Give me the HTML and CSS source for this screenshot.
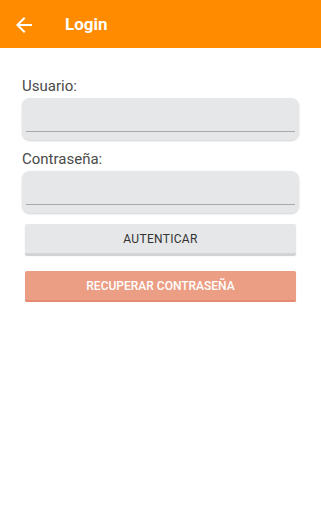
FILE: index.html
```html
<!DOCTYPE html>
<html lang="es">
<head>
    <meta charset="UTF-8">
    <meta name="viewport" content="width=device-width, initial-scale=1.0">
    <title>Login</title>
    <link rel="stylesheet" href="styles.css">
</head>
<body>
    <header class="toolbar">
        <button class="back" type="button" aria-label="Volver">
            <svg width="24" height="24" viewBox="0 0 24 24">
                <path d="M20 11H7.83l5.59-5.59L12 4l-8 8 8 8 1.41-1.41L7.83 13H20v-2z" fill="#fff"/>
            </svg>
        </button>
        <h1>Login</h1>
    </header>

    <form class="login">
        <label for="usuario">Usuario:</label>
        <div class="field">
            <input type="text" id="usuario">
        </div>

        <label for="clave">Contraseña:</label>
        <div class="field">
            <input type="password" id="clave">
        </div>

        <button type="submit" class="btn">AUTENTICAR</button>
        <button type="button" class="btn btn-recover">RECUPERAR CONTRASEÑA</button>
    </form>
</body>
</html>
```

FILE: styles.css
```css
* {
    margin: 0;
    padding: 0;
    box-sizing: border-box;
    font-family: Roboto, 'Noto Sans', sans-serif;
}

body {
    background: #fff;
    width: 321px;
}

.toolbar {
    height: 48px;
    background: #ff8c00;
    display: flex;
    align-items: center;
}

.back {
    width: 24px;
    height: 24px;
    margin-left: 12px;
    margin-top: 2px;
    background: none;
    border: none;
    display: flex;
}

.toolbar h1 {
    margin-left: 29px;
    color: #fff;
    font-size: 17px;
    font-weight: 700;
}

.login {
    padding: 29px 22px 0;
    display: flex;
    flex-direction: column;
}

label {
    font-size: 15px;
    line-height: 18px;
    color: #4a4a4a;
    margin-bottom: 3px;
}

.field {
    height: 42px;
    background: #e6e7e9;
    border-radius: 8px;
    padding: 0 4px;
    box-shadow: 0 1px 2px rgba(0,0,0,0.18);
    margin-bottom: 10px;
}

.field input {
    display: block;
    width: 100%;
    height: 34px;
    background: transparent;
    border: none;
    border-bottom: 1px solid #a8a8a8;
    outline: none;
    font-size: 15px;
}

.field + label {
    margin-bottom: 3px;
}

.btn {
    margin: 1px 3px 0;
    height: 31px;
    background: #e6e7e9;
    border: none;
    border-radius: 2px;
    box-shadow: 0 1px 1px rgba(0,0,0,0.2);
    border-bottom: 2px solid #d3d4d7;
    font-size: 12px;
    font-weight: 400;
    color: #333;
    letter-spacing: 0.3px;
}

.btn-recover {
    margin-top: 16px;
    background: #eb9e84;
    border-bottom-color: #e48b70;
    color: #fff;
    font-weight: 500;
    letter-spacing: 0;
}
```
